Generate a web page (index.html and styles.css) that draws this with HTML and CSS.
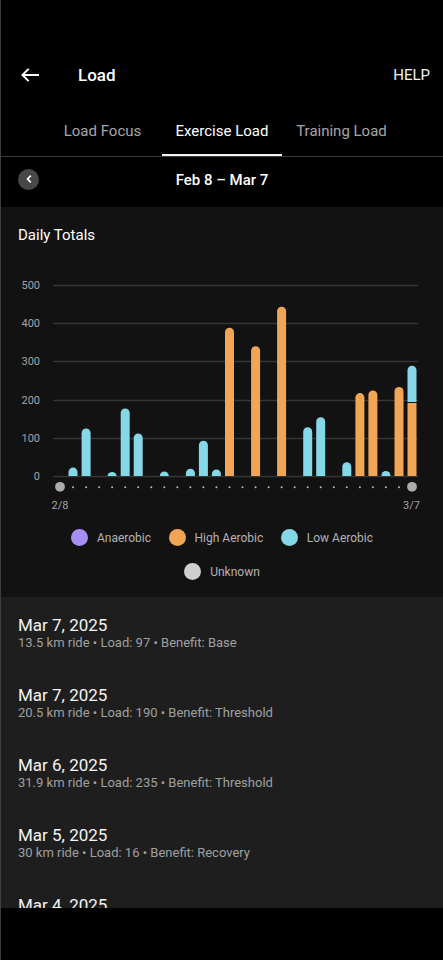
FILE: index.html
```html
<!DOCTYPE html>
<html lang="en">
<head>
<meta charset="utf-8">
<title>Load</title>
<link rel="stylesheet" href="styles.css">
</head>
<body>
<div class="app">
  <header class="topbar">
    <span class="back" aria-label="Back">
      <svg width="18" height="14" viewBox="0 0 18 14"><path d="M18 7H1.4M7.6 0.8L1.4 7l6.2 6.2" stroke="#fff" stroke-width="1.9" fill="none"/></svg>
    </span>
    <h1 class="title">Load</h1>
    <span class="help">HELP</span>
  </header>

  <nav class="tabs">
    <div class="tab">Load Focus</div>
    <div class="tab active">Exercise Load</div>
    <div class="tab">Training Load</div>
  </nav>

  <div class="range">
    <span class="round-btn">
      <svg width="8" height="10" viewBox="0 0 8 10"><path d="M5.8 1.6L2.6 5l3.2 3.4" stroke="#fff" stroke-width="1.7" fill="none"/></svg>
    </span>
    <span class="range-label">Feb 8 – Mar 7</span>
    <span></span>
  </div>

  <section class="card">
    <h2 class="card-title">Daily Totals</h2>
    <svg class="chart" width="442" height="250" viewBox="1 262 442 250">
      <g class="grid">
        <line x1="53" x2="418" y1="285.5" y2="285.5"/>
        <line x1="53" x2="418" y1="323.5" y2="323.5"/>
        <line x1="53" x2="418" y1="361.5" y2="361.5"/>
        <line x1="53" x2="418" y1="400.5" y2="400.5"/>
        <line x1="53" x2="418" y1="438.5" y2="438.5"/>
        <line x1="53" x2="418" y1="476.5" y2="476.5"/>
      </g>
      <g class="axis ylab">
        <text x="40" y="285.5">500</text>
        <text x="40" y="323.5">400</text>
        <text x="40" y="361.5">300</text>
        <text x="40" y="400.5">200</text>
        <text x="40" y="438.5">100</text>
        <text x="40" y="476.5">0</text>
      </g>
      <g class="low">
        <path d="M68.5,476V472.1a4.5,4.5 0 0 1 9,0V476Z"/>
        <path d="M81.6,476V432.9a4.5,4.5 0 0 1 9,0V476Z"/>
        <path d="M107.6,476a4.5,4 0 0 1 9,0Z"/>
        <path d="M120.7,476V412.9a4.5,4.5 0 0 1 9,0V476Z"/>
        <path d="M133.7,476V437.9a4.5,4.5 0 0 1 9,0V476Z"/>
        <path d="M159.8,476V475.9a4.5,4.5 0 0 1 9,0V476Z"/>
        <path d="M185.9,476V473.2a4.5,4.5 0 0 1 9,0V476Z"/>
        <path d="M198.9,476V445.2a4.5,4.5 0 0 1 9,0V476Z"/>
        <path d="M211.9,476V474a4.5,4.5 0 0 1 9,0V476Z"/>
        <path d="M303.2,476V431.7a4.5,4.5 0 0 1 9,0V476Z"/>
        <path d="M316.2,476V421.7a4.5,4.5 0 0 1 9,0V476Z"/>
        <path d="M342.3,476V466.7a4.5,4.5 0 0 1 9,0V476Z"/>
        <path d="M381.4,476V475.5a4.5,4.5 0 0 1 9,0V476Z"/>
        <path d="M407.5,402V370.3a4.5,4.5 0 0 1 9,0V402Z"/>
      </g>
      <g class="high">
        <path d="M225,476V332.3a4.5,4.5 0 0 1 9,0V476Z"/>
        <path d="M251.1,476V350.7a4.5,4.5 0 0 1 9,0V476Z"/>
        <path d="M277.1,476V311.2a4.5,4.5 0 0 1 9,0V476Z"/>
        <path d="M355.4,476V397.6a4.5,4.5 0 0 1 9,0V476Z"/>
        <path d="M368.4,476V394.9a4.5,4.5 0 0 1 9,0V476Z"/>
        <path d="M394.5,476V391.4a4.5,4.5 0 0 1 9,0V476Z"/>
        <path d="M407.5,476V403h9V476Z"/>
      </g>
      <g class="dots">
        <circle cx="73" cy="487.3" r="1"/>
        <circle cx="86.1" cy="487.3" r="1"/>
        <circle cx="99.1" cy="487.3" r="1"/>
        <circle cx="112.1" cy="487.3" r="1"/>
        <circle cx="125.2" cy="487.3" r="1"/>
        <circle cx="138.2" cy="487.3" r="1"/>
        <circle cx="151.3" cy="487.3" r="1"/>
        <circle cx="164.3" cy="487.3" r="1"/>
        <circle cx="177.3" cy="487.3" r="1"/>
        <circle cx="190.4" cy="487.3" r="1"/>
        <circle cx="203.4" cy="487.3" r="1"/>
        <circle cx="216.4" cy="487.3" r="1"/>
        <circle cx="229.5" cy="487.3" r="1"/>
        <circle cx="242.5" cy="487.3" r="1"/>
        <circle cx="255.6" cy="487.3" r="1"/>
        <circle cx="268.6" cy="487.3" r="1"/>
        <circle cx="281.6" cy="487.3" r="1"/>
        <circle cx="294.7" cy="487.3" r="1"/>
        <circle cx="307.7" cy="487.3" r="1"/>
        <circle cx="320.7" cy="487.3" r="1"/>
        <circle cx="333.8" cy="487.3" r="1"/>
        <circle cx="346.8" cy="487.3" r="1"/>
        <circle cx="359.9" cy="487.3" r="1"/>
        <circle cx="372.9" cy="487.3" r="1"/>
        <circle cx="385.9" cy="487.3" r="1"/>
        <circle cx="399" cy="487.3" r="1"/>
      </g>
      <g class="ends">
        <circle cx="60" cy="486.8" r="4.9"/>
        <circle cx="412" cy="486.8" r="4.9"/>
      </g>
      <g class="axis xlab">
        <text x="60" y="505">2/8</text>
        <text x="411.5" y="505">3/7</text>
      </g>
    </svg>
    <div class="legend">
      <div class="legend-item"><span class="swatch anaerobic"></span>Anaerobic</div>
      <div class="legend-item"><span class="swatch high-aerobic"></span>High Aerobic</div>
      <div class="legend-item"><span class="swatch low-aerobic"></span>Low Aerobic</div>
      <div class="legend-item"><span class="swatch unknown"></span>Unknown</div>
    </div>
  </section>

  <section class="list">
    <div class="item">
      <div class="item-title">Mar 7, 2025</div>
      <div class="item-sub">13.5 km ride • Load: 97 • Benefit: Base</div>
    </div>
    <div class="item">
      <div class="item-title">Mar 7, 2025</div>
      <div class="item-sub">20.5 km ride • Load: 190 • Benefit: Threshold</div>
    </div>
    <div class="item">
      <div class="item-title">Mar 6, 2025</div>
      <div class="item-sub">31.9 km ride • Load: 235 • Benefit: Threshold</div>
    </div>
    <div class="item">
      <div class="item-title">Mar 5, 2025</div>
      <div class="item-sub">30 km ride • Load: 16 • Benefit: Recovery</div>
    </div>
    <div class="item">
      <div class="item-title">Mar 4, 2025</div>
    </div>
  </section>

  <div class="navbar"></div>
</div>
</body>
</html>
```

FILE: styles.css
```css
* { box-sizing: border-box; }

html, body {
  margin: 0;
  padding: 0;
  background: #000;
}

body {
  font-family: Roboto, "Noto Sans", "Liberation Sans", sans-serif;
  color: #fff;
}

.app {
  width: 443px;
  height: 960px;
  border-left: 1px solid #3d3d3d;
  background: #000;
  padding-top: 47px;
  display: flex;
  flex-direction: column;
  overflow: hidden;
}

/* top bar */
.topbar {
  height: 56px;
  display: flex;
  align-items: center;
  padding: 0 13px 0 20px;
}

.back {
  display: flex;
  width: 18px;
  height: 14px;
}

.title {
  margin: 0 0 0 39px;
  font-size: 17px;
  font-weight: 500;
  line-height: 20px;
  flex: 1;
}

.help {
  font-size: 15px;
  line-height: 20px;
  color: #f2f2f2;
}

/* tabs */
.tabs {
  height: 54px;
  display: flex;
  justify-content: center;
  border-bottom: 1px solid #3a3a3a;
}

.tab {
  width: 119.5px;
  padding-top: 18px;
  font-size: 15px;
  line-height: 20px;
  text-align: center;
  color: #a6a6a6;
  position: relative;
}

.tab.active {
  color: #fff;
}

.tab.active::after {
  content: "";
  position: absolute;
  left: 0;
  right: 0;
  bottom: 0;
  height: 2.5px;
  background: #f2f2f2;
}

/* date range */
.range {
  height: 50px;
  display: grid;
  grid-template-columns: 1fr auto 1fr;
  align-items: center;
  padding: 0 17px 6px;
}

.round-btn {
  width: 21px;
  height: 21px;
  border-radius: 50%;
  background: #484848;
  display: flex;
  align-items: center;
  justify-content: center;
}

.range-label {
  font-size: 15px;
  font-weight: 500;
  line-height: 22px;
  padding-top: 2px;
}

/* chart card */
.card {
  background: #121212;
  padding: 18px 0 17px;
}

.card-title {
  margin: 0;
  padding-left: 17px;
  font-size: 15px;
  font-weight: 400;
  line-height: 20px;
}

.chart {
  display: block;
  margin-top: 17px;
}

.grid line {
  stroke: #363636;
  stroke-width: 1.3;
}

.axis {
  font-family: Roboto, "Noto Sans", sans-serif;
  font-size: 11px;
  fill: #a3a3a3;
  dominant-baseline: central;
}

.ylab { text-anchor: end; }
.xlab { text-anchor: middle; }

.low path { fill: #84d8e8; }
.high path { fill: #f2a555; }
.dots circle { fill: #bdbdbd; }
.ends circle { fill: #ababab; }

.legend {
  margin: 17px auto 0;
  width: 320px;
  display: flex;
  flex-wrap: wrap;
  justify-content: center;
  column-gap: 17.5px;
  row-gap: 17px;
}

.legend-item {
  display: flex;
  align-items: center;
  gap: 9px;
  height: 17px;
  font-size: 12px;
  color: #b3b3b3;
}

.swatch {
  width: 17px;
  height: 17px;
  border-radius: 50%;
}

.anaerobic { background: #a98df6; }
.high-aerobic { background: #f2a555; }
.low-aerobic { background: #84d8e8; }
.unknown { background: #cfcfcf; }

/* activity list */
.list {
  background: #1e1e1e;
  height: 311px;
  overflow: hidden;
}

.item {
  padding: 18px 17px 16px;
}

.item-title {
  font-size: 17px;
  line-height: 20px;
  color: #f4f4f4;
}

.item-sub {
  font-size: 13px;
  line-height: 16px;
  color: #a0a0a0;
}

.navbar {
  flex: 1;
  background: #000;
}
```
